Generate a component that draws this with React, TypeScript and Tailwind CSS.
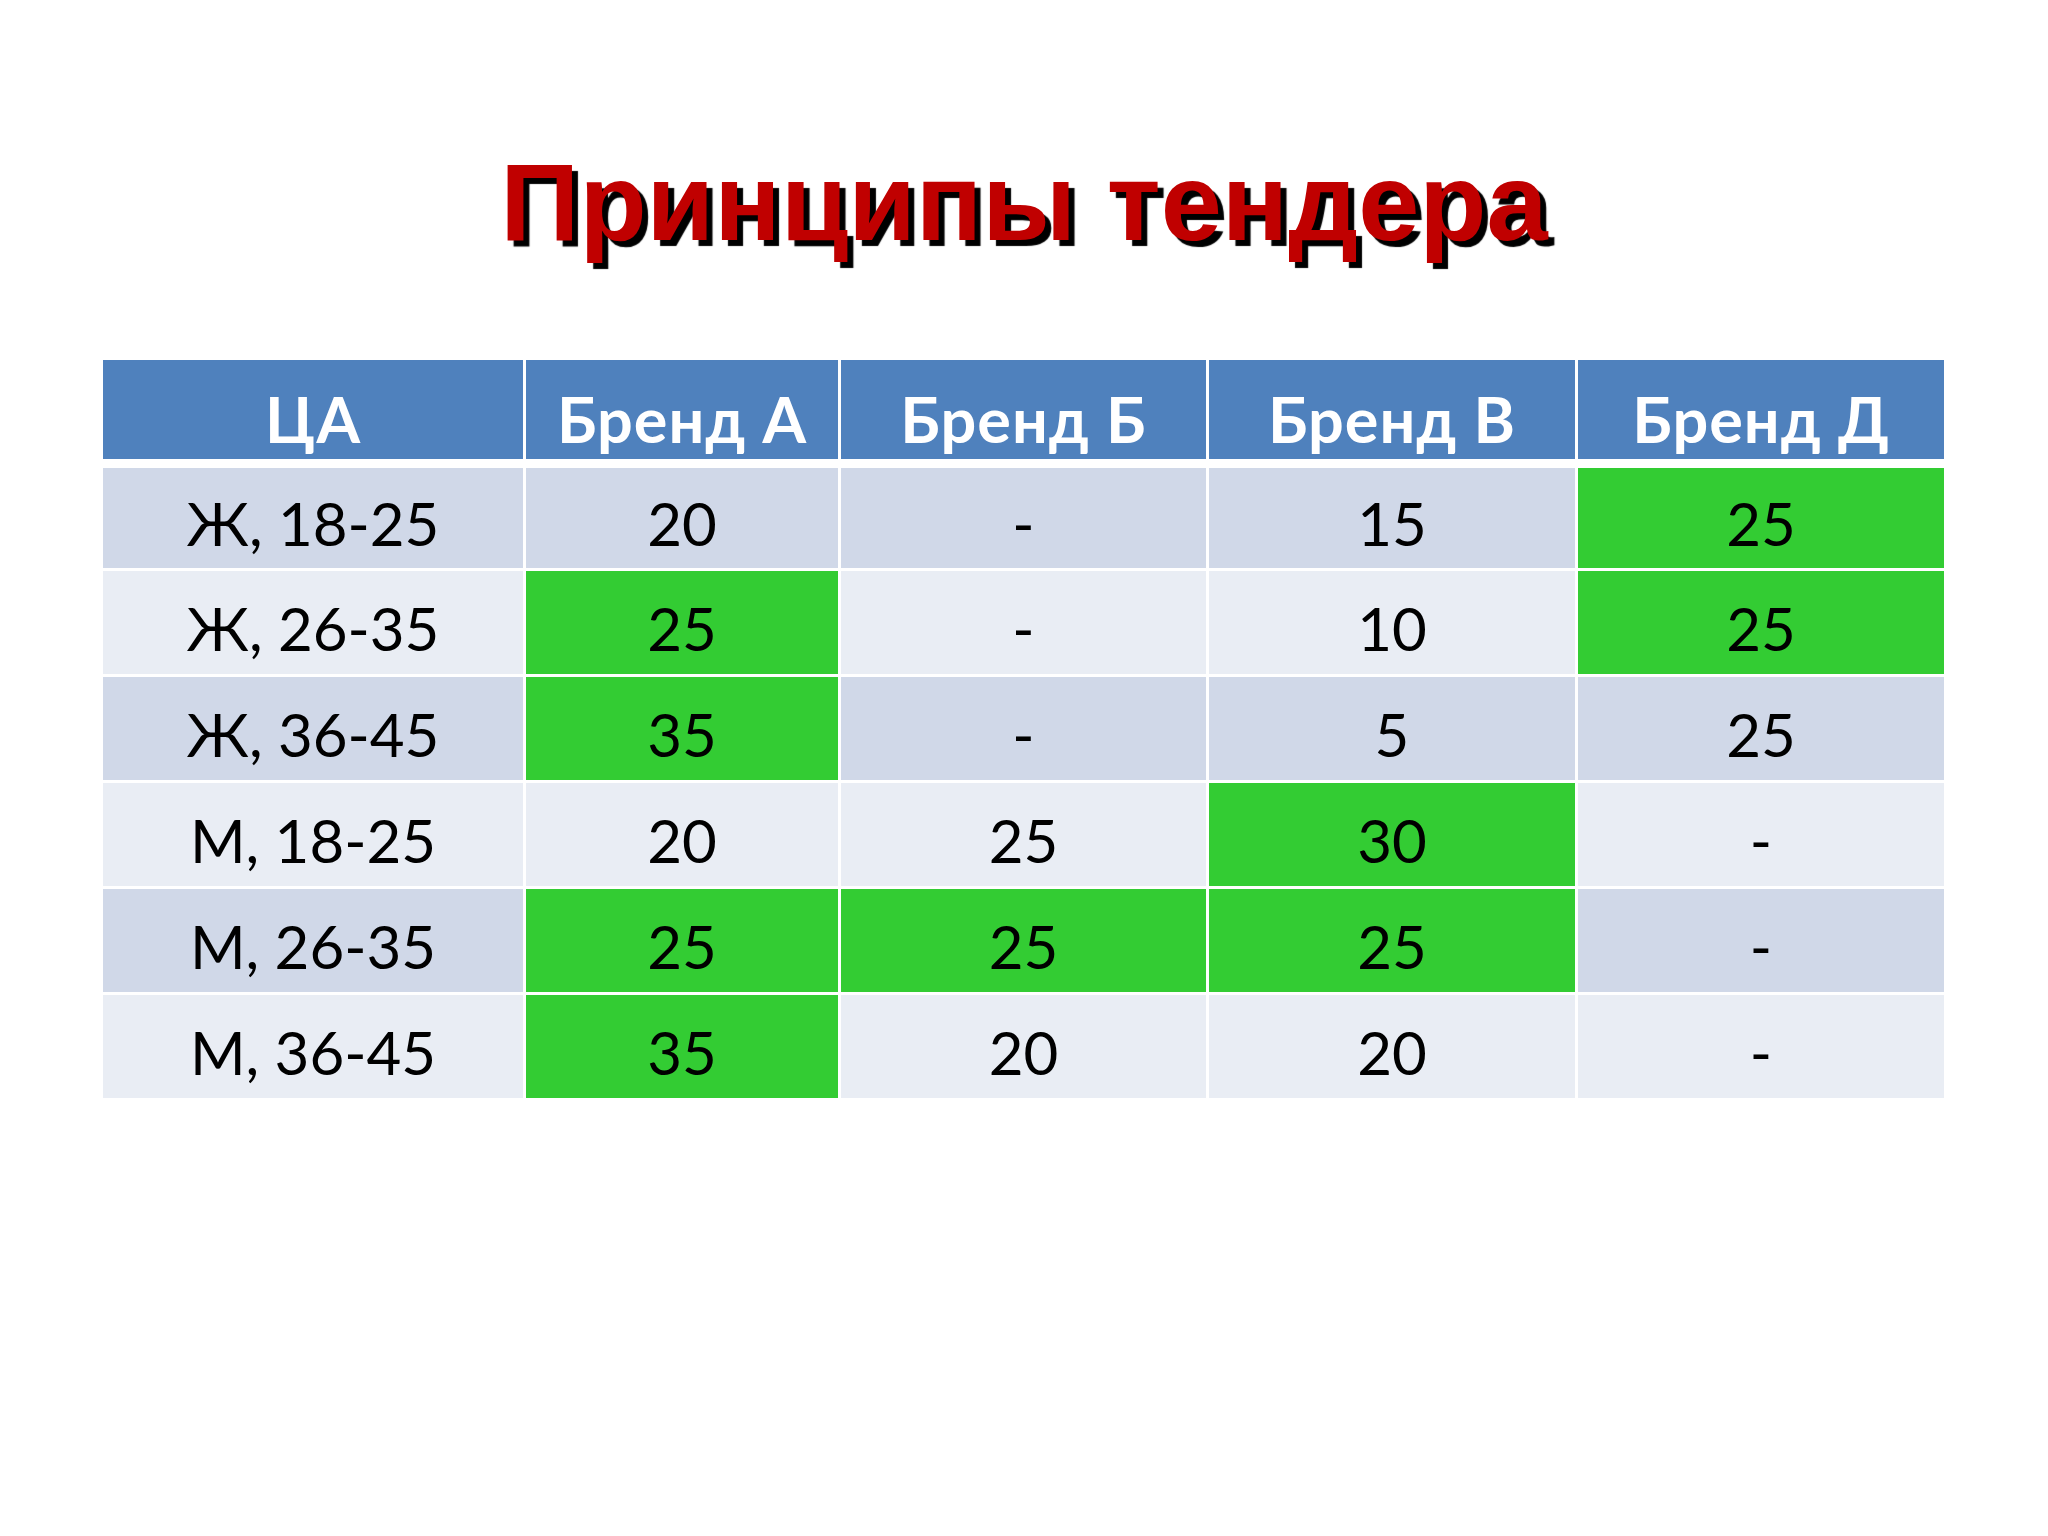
import React from "react";

type Cell = { value: string; hit?: boolean };

interface Row {
  label: string;
  cells: Cell[];
}

const brands = ["Бренд А", "Бренд Б", "Бренд В", "Бренд Д"];

const rows: Row[] = [
  {
    label: "Ж, 18-25",
    cells: [{ value: "20" }, { value: "-" }, { value: "15" }, { value: "25", hit: true }],
  },
  {
    label: "Ж, 26-35",
    cells: [{ value: "25", hit: true }, { value: "-" }, { value: "10" }, { value: "25", hit: true }],
  },
  {
    label: "Ж, 36-45",
    cells: [{ value: "35", hit: true }, { value: "-" }, { value: "5" }, { value: "25" }],
  },
  {
    label: "М, 18-25",
    cells: [{ value: "20" }, { value: "25" }, { value: "30", hit: true }, { value: "-" }],
  },
  {
    label: "М, 26-35",
    cells: [{ value: "25", hit: true }, { value: "25", hit: true }, { value: "25", hit: true }, { value: "-" }],
  },
  {
    label: "М, 36-45",
    cells: [{ value: "35", hit: true }, { value: "20" }, { value: "20" }, { value: "-" }],
  },
];

const cols = "grid grid-cols-[420px_312px_365px_366px_366px] gap-x-[3px]";
const headCell =
  "h-[99px] bg-[#4f81bd] flex items-center justify-center pt-[17px] text-white font-bold text-[63px] tracking-[1px] leading-none";

export default function App() {
  return (
    <div className="w-[2048px] h-[1536px] bg-white overflow-hidden">
      {/* title */}
      <div className="pt-[147px] h-[360px]">
        <h1
          className="text-center text-[110px] leading-none font-bold text-[#c00000] [text-shadow:6px_6px_1px_#000]"
          style={{ fontFamily: '"Liberation Sans", Arial, sans-serif' }}
        >
          Принципы тендера
        </h1>
      </div>

      {/* table */}
      <div
        className="ml-[103px] w-[1841px] flex flex-col gap-y-[9px]"
        style={{ fontFamily: "Lato, 'Open Sans', sans-serif" }}
      >
        <div className={cols}>
          <div className={headCell}>ЦА</div>
          {brands.map((b) => (
            <div key={b} className={headCell}>
              {b}
            </div>
          ))}
        </div>

        <div className={cols + " gap-y-[3px]"}>
          {rows.map((row, i) => {
            const stripe = i % 2 === 0 ? "bg-[#d0d8e8]" : "bg-[#e9edf4]";
            const h = i === 0 ? "h-[100px]" : "h-[103px]";
            return (
              <React.Fragment key={row.label}>
                <div
                  className={`${h} ${stripe} flex items-center justify-center pt-[10px] text-black text-[60px] leading-none`}
                >
                  {row.label}
                </div>
                {row.cells.map((c, j) => (
                  <div
                    key={j}
                    className={`${h} ${c.hit ? "bg-[#33cc33]" : stripe} flex items-center justify-center pt-[10px] text-black text-[60px] leading-none`}
                  >
                    {c.value}
                  </div>
                ))}
              </React.Fragment>
            );
          })}
        </div>
      </div>
    </div>
  );
}
